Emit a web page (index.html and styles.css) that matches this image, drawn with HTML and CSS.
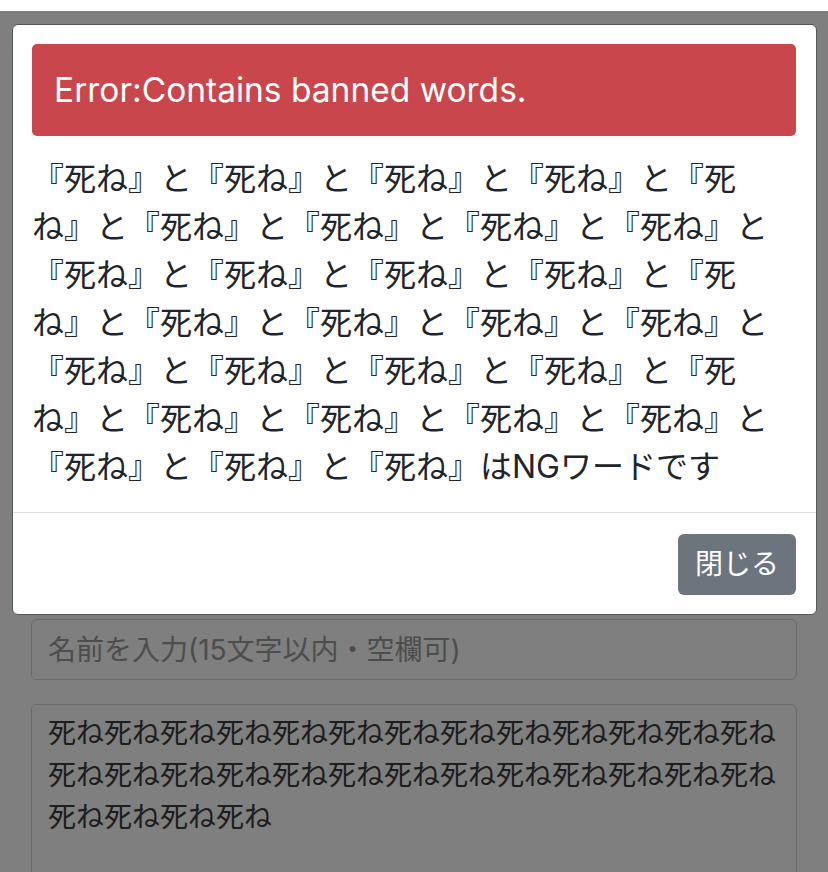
FILE: index.html
```html
<!DOCTYPE html>
<html>
<head>
    <title>投稿フォーム</title>
    <meta charset="utf-8" />
    <link rel="stylesheet" href="styles.css">
</head>
<body>
    <div class="container">
        <form class="post-form">
            <input type="text" class="name-input" placeholder="名前を入力(15文字以内・空欄可)">
            <textarea class="message-input">死ね死ね死ね死ね死ね死ね死ね死ね死ね死ね死ね死ね死ね死ね死ね死ね死ね死ね死ね死ね死ね死ね死ね死ね死ね死ね死ね死ね死ね死ね</textarea>
        </form>
    </div>

    <div class="modal-backdrop"></div>
    <div class="modal">
        <div class="modal-content">
            <div class="modal-body">
                <div class="alert">Error:Contains banned words.</div>
                <p class="message">『死ね』と『死ね』と『死ね』と『死ね』と『死ね』と『死ね』と『死ね』と『死ね』と『死ね』と『死ね』と『死ね』と『死ね』と『死ね』と『死ね』と『死ね』と『死ね』と『死ね』と『死ね』と『死ね』と『死ね』と『死ね』と『死ね』と『死ね』と『死ね』と『死ね』と『死ね』と『死ね』と『死ね』と『死ね』と『死ね』はNGワードです</p>
            </div>
            <div class="modal-footer">
                <button type="button" class="btn-close">閉じる</button>
            </div>
        </div>
    </div>
</body>
</html>
```

FILE: styles.css
```css
body {
    font-family: 'Inter', 'Noto Sans CJK JP', sans-serif;
    background-color: #fff;
    color: #212529;
    margin: 0;
    padding: 0;
    text-spacing-trim: space-all;
}
.container {
    padding: 619px 31px 0 31px;
}
.post-form {
    display: flex;
    flex-direction: column;
    gap: 24px;
}
.name-input, .message-input {
    font-family: 'Inter', 'Noto Sans CJK JP', sans-serif;
    font-size: 28px;
    line-height: 42px;
    color: #3c3c3c;
    background-color: #fff;
    border: 1px solid #ced4da;
    border-radius: 6px;
    box-sizing: border-box;
    width: 100%;
    margin: 0;
    text-spacing-trim: space-all;
}
.name-input {
    height: 61px;
    padding: 8px 16px;
}
.name-input::placeholder {
    color: #9a9a9a;
}
.message-input {
    height: 320px;
    padding: 7px 16px;
    resize: none;
}
.modal-backdrop {
    position: fixed;
    top: 11px;
    left: 0;
    right: 0;
    bottom: 0;
    background-color: rgba(0, 0, 0, 0.5);
}
.modal {
    position: fixed;
    top: 24px;
    left: 12px;
    width: 805px;
}
.modal-content {
    background-color: #fff;
    border: 1px solid #505858;
    border-radius: 6px;
}
.modal-body {
    padding: 19px 20px 21px 19px;
}
.alert {
    background-color: #c8464c;
    color: #fff;
    font-size: 33.5px;
    line-height: 48px;
    padding: 22px 22px;
    border-radius: 5px;
    margin-bottom: 19px;
}
.message {
    font-size: 32px;
    line-height: 48px;
    margin: 0;
}
.modal-footer {
    border-top: 1px solid #dee2e6;
    padding: 21px 20px 19px 20px;
    display: flex;
    justify-content: flex-end;
}
.btn-close {
    font-family: 'Inter', 'Noto Sans CJK JP', sans-serif;
    background-color: #6c757d;
    color: #fff;
    border: none;
    border-radius: 6px;
    font-size: 28px;
    line-height: 41px;
    padding: 10px 17px;
    cursor: pointer;
}
```
